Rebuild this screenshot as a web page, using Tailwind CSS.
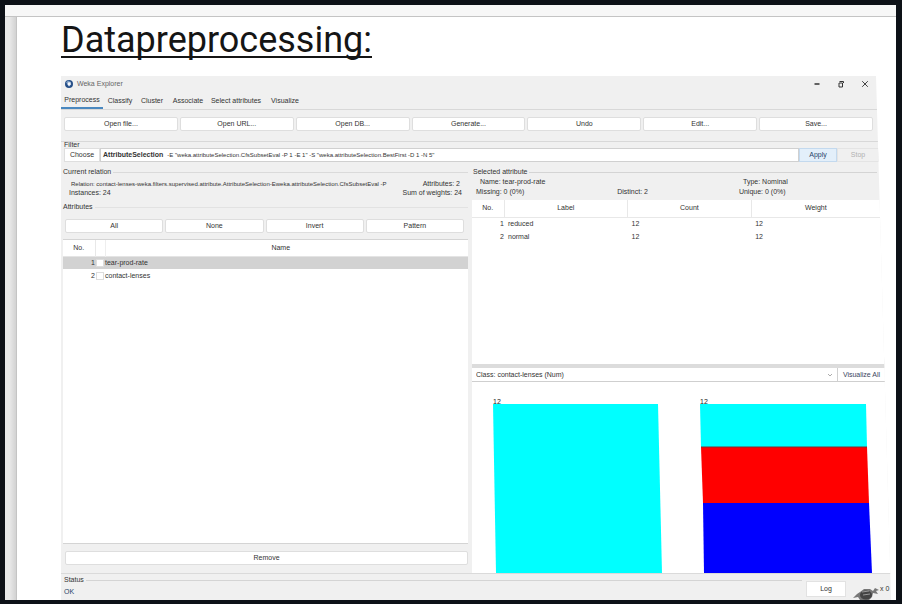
<!DOCTYPE html>
<html lang="en">
<head>
<meta charset="utf-8">
<title>Datapreprocessing</title>
<script src="https://cdn.jsdelivr.net/npm/@tailwindcss/browser@4"></script>
</head>
<body class="min-h-screen flex flex-col bg-[#0d1117] pt-[5px] pb-1 pl-[5px] pr-1.5">
<div class="flex-1 flex flex-col bg-white">
  <div class="h-3 bg-[#f7f7f7] border-b border-[#c4c4c4]"></div>
  <div class="flex-1 flex">
    <div class="w-3 bg-linear-to-r from-[#e9e9e9] from-40% to-[#d2d2d2] border-r border-[#c4c4c4]"></div>
    <main class="flex-1 min-w-0 flex flex-col pl-11 pr-[5px]">
      <h1 class="h-[59px] pt-px text-[36px] leading-[44px] text-[#151515] font-[Roboto,sans-serif] underline decoration-2 underline-offset-4 [text-decoration-skip-ink:none]">Datapreprocessing:</h1>

      <div class="flex-1 flex flex-col bg-[#f0f0f0] text-[7px] leading-[8px] text-[#333] whitespace-nowrap font-['Liberation_Sans',Arial,sans-serif] [clip-path:polygon(0_0,calc(100%_-_15px)_0,100%_100%,0_100%)]">
        <header class="h-4 flex items-center pl-1 pr-[22px]">
          <svg class="w-2 h-2 mr-1" viewBox="0 0 8 8"><circle cx="4" cy="4" r="4" fill="#254e87"/><path d="M1 2.2 3 .6 5.8 2 6.2 4.6 4 6.8 2.6 4.8Z" fill="#7c9cc4"/><path d="M3 2.4 5.4 2.2 5.8 4.6 4 6 2.6 4.4Z" fill="#f4f7fb"/></svg>
          <span class="flex-1 text-[#666]">Weka Explorer</span>
          <div class="flex gap-4">
            <button aria-label="Minimize" class="w-2 h-2"><svg viewBox="0 0 8 8"><path d="M1.5 4H6.5" stroke="#333" stroke-width="1.3"/></svg></button>
            <button aria-label="Restore" class="w-2 h-2"><svg viewBox="0 0 8 8" fill="none" stroke="#333"><path d="M2 3H5.5V7H2Z"/><path d="M2.5 1.5H6.5V3"/></svg></button>
            <button aria-label="Close" class="w-2 h-2"><svg viewBox="0 0 8 8"><path d="M1.2 1.2 6.8 6.8M6.8 1.2 1.2 6.8" stroke="#444"/></svg></button>
          </div>
        </header>
        <nav class="h-[18px] flex border-b border-[#d8d8d8]">
          <button class="w-[42px] border-b-2 border-[#4a88bf]">Preprocess</button>
          <button class="w-[34px]">Classify</button>
          <button class="w-[30px]">Cluster</button>
          <button class="w-[42px]">Associate</button>
          <button class="w-[54px]">Select attributes</button>
          <button class="w-11">Visualize</button>
        </nav>

        <div class="grid grid-cols-7 gap-0.5 pt-[7px] pb-2.5 pl-[3px] pr-[18px] border-b border-[#d8d8d8]">
          <button class="h-3.5 bg-white border border-[#dedede] rounded-xs">Open file...</button>
          <button class="h-3.5 bg-white border border-[#dedede] rounded-xs">Open URL...</button>
          <button class="h-3.5 bg-white border border-[#dedede] rounded-xs">Open DB...</button>
          <button class="h-3.5 bg-white border border-[#dedede] rounded-xs">Generate...</button>
          <button class="h-3.5 bg-white border border-[#dedede] rounded-xs">Undo</button>
          <button class="h-3.5 bg-white border border-[#dedede] rounded-xs">Edit...</button>
          <button class="h-3.5 bg-white border border-[#dedede] rounded-xs">Save...</button>
        </div>

        <section class="pl-[3px] pr-3">
          <h2 class="h-1.5 flex items-center">Filter</h2>
          <div class="h-3.5 flex">
            <button class="w-9 bg-white border border-[#dedede]">Choose</button>
            <div class="flex-1 flex items-center gap-1 px-0.5 bg-white border border-[#d0d0d0]"><b>AttributeSelection</b><span class="text-[6px]">-E "weka.attributeSelection.CfsSubsetEval -P 1 -E 1" -S "weka.attributeSelection.BestFirst -D 1 -N 5"</span></div>
            <button class="w-[38px] bg-[#e3effa] border border-[#c3d9ee] text-[#26446a]">Apply</button>
            <button class="w-[42px] border border-[#e4e4e4] text-[#b0b0b0]" disabled>Stop</button>
          </div>
        </section>

        <div class="flex-1 grid grid-cols-[411fr_419fr] pt-1.5">
          <div class="flex flex-col min-w-0 pl-0.5 pr-1">
            <section>
              <h2 class="flex items-center gap-0.5 after:flex-1 after:h-px after:bg-[#dadada]">Current relation</h2>
              <div class="flex justify-between pt-1 pl-2 pr-2"><span class="text-[6px]">Relation: contact-lenses-weka.filters.supervised.attribute.AttributeSelection-Eweka.attributeSelection.CfsSubsetEval -P</span><span>Attributes: 2</span></div>
              <div class="flex justify-between pt-px pl-1.5 pr-1.5"><span>Instances: 24</span><span>Sum of weights: 24</span></div>
            </section>
            <section class="flex-1 flex flex-col pt-1.5">
              <h2 class="flex items-center gap-0.5 after:flex-1 after:h-px after:bg-[#e2e2e2]">Attributes</h2>
              <div class="grid grid-cols-4 gap-0.5 pt-2 pb-1.5 pl-0.5 pr-1">
                <button class="h-3.5 bg-white border border-[#dedede] rounded-xs">All</button>
                <button class="h-3.5 bg-white border border-[#dedede] rounded-xs">None</button>
                <button class="h-3.5 bg-white border border-[#dedede] rounded-xs">Invert</button>
                <button class="h-3.5 bg-white border border-[#dedede] rounded-xs">Pattern</button>
              </div>
              <div class="flex-1 bg-white border-y border-[#d4d4d4]">
                <table class="w-full table-fixed">
                  <colgroup><col class="w-8"><col class="w-2.5"><col></colgroup>
                  <thead><tr class="h-4 border-b border-[#e4e4e4]"><th class="font-normal border-r border-[#e8e8e8]">No.</th><th class="border-r border-[#eee]"></th><th class="pr-3 font-normal">Name</th></tr></thead>
                  <tbody>
                    <tr class="h-[13px] bg-[#d2d2d2]"><td class="text-right">1</td><td><input type="checkbox" aria-label="tear-prod-rate" class="block mx-auto appearance-none size-2 bg-white border border-[#ddd]"></td><td>tear-prod-rate</td></tr>
                    <tr class="h-[13px]"><td class="text-right">2</td><td><input type="checkbox" aria-label="contact-lenses" class="block mx-auto appearance-none size-2 bg-white border border-[#ddd]"></td><td>contact-lenses</td></tr>
                  </tbody>
                </table>
              </div>
              <div class="flex pt-[7px] pb-2 pl-0.5"><button class="flex-1 h-3.5 bg-white border border-[#dedede] rounded-xs">Remove</button></div>
            </section>
          </div>

          <div class="flex flex-col min-w-0">
            <section class="flex-1 flex flex-col pr-1.5">
              <h2 class="flex items-center gap-0.5 pr-2 pl-px after:flex-1 after:h-px after:bg-[#d4d4d4]">Selected attribute</h2>
              <div class="grid grid-cols-[145fr_120fr_143fr] pt-0.5 pl-2"><span>Name: tear-prod-rate</span><span></span><span>Type: Nominal</span></div>
              <div class="grid grid-cols-[145fr_125fr_150fr] pt-0.5 pb-1 pl-1"><span>Missing: 0 (0%)</span><span>Distinct: 2</span><span>Unique: 0 (0%)</span></div>
              <div class="flex-1 bg-white border-r border-[#e4e4e4]">
                <table class="w-full table-fixed">
                  <colgroup><col class="w-8"><col class="w-[30%]"><col class="w-[30%]"><col></colgroup>
                  <thead><tr class="h-[17px] border-b border-[#e8e8e8]"><th class="font-normal border-r border-[#e8e8e8]">No.</th><th class="font-normal border-r border-[#e8e8e8]">Label</th><th class="font-normal border-r border-[#e8e8e8]">Count</th><th class="pr-1 font-normal">Weight</th></tr></thead>
                  <tbody>
                    <tr class="h-[13px]"><td class="text-right">1</td><td class="pl-1">reduced</td><td class="pl-1">12</td><td class="pl-1">12</td></tr>
                    <tr class="h-[13px]"><td class="text-right">2</td><td class="pl-1">normal</td><td class="pl-1">12</td><td class="pl-1">12</td></tr>
                  </tbody>
                </table>
              </div>
            </section>
            <div class="h-1 mr-1.5 bg-[#dcdcdc]"></div>
            <div class="h-3.5 flex bg-[#fafafa] border-b border-[#cfcfcf]">
              <div class="relative flex-1 flex">
                <select aria-label="Class attribute" class="flex-1 appearance-none pl-1 bg-white"><option>Class: contact-lenses (Num)</option></select>
                <svg class="absolute right-1 top-1 w-1.5 h-1.5 pointer-events-none" viewBox="0 0 6 6"><path d="M1 2 3 4 5 2" fill="none" stroke="#888" stroke-width=".7"/></svg>
              </div>
              <button class="w-[54px] pr-1.5 border-l border-[#d0d0d0] bg-white text-[#3a4660]">Visualize All</button>
            </div>
            <div class="bg-white">
              <svg class="block w-full h-[191px]" viewBox="0 0 419 191" preserveAspectRatio="none" font-size="7" fill="#222">
                <text x="21" y="22">12</text><text x="228" y="22">12</text>
                <path d="M21 22H186L190 191H24Z" fill="#00ffff"/>
                <path d="M228 22H394L395 65H229Z" fill="#00ffff"/>
                <path d="M229 65H395L397 121H231Z" fill="#ff0000"/>
                <path d="M231 121H397L400 191H232Z" fill="#0000ff"/>
                <path d="M229 65H395" stroke="#7c3030"/>
              </svg>
            </div>
          </div>
        </div>

        <footer class="h-[27px] flex border-t border-[#dadada] pl-[3px] pr-px">
          <div class="flex-1 pt-0.5">
            <h2 class="flex items-center gap-0.5 after:flex-1 after:h-px after:bg-[#d4d4d4]">Status</h2>
            <p class="pt-1 text-[#26446a]">OK</p>
          </div>
          <button class="w-10 h-4 mt-[7px] ml-1 bg-white border border-[#e2e2e2]">Log</button>
          <svg class="w-7 h-4 mt-[11px] ml-1.5" viewBox="0 0 28 16"><path d="M1 13 5 9 8 7 12 4 18 4 21 6 23 3 27 5 24 6 26 9 21 8 20 12 17 15H8L6 12Z" fill="#777"/><ellipse cx="14" cy="10" rx="6" ry="4.5" fill="#444"/><path d="M10 7 17 6M11 10 18 9" stroke="#999"/></svg>
          <span class="w-2.5 mt-[11px]">x 0</span>
        </footer>
      </div>
    </main>
  </div>
</div>
</body>
</html>
